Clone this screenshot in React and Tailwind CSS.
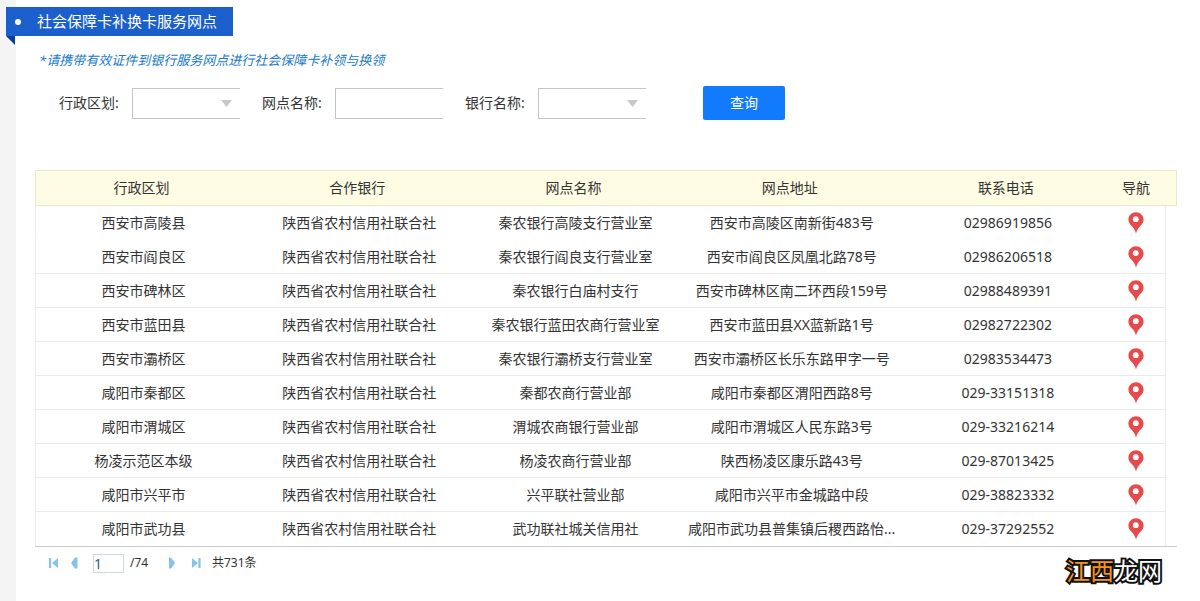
import React, { useState } from 'react';

const columns = ['行政区划', '合作银行', '网点名称', '网点地址', '联系电话'];

const bank = '陕西省农村信用社联合社';

const branches = [
  { area: '西安市高陵县', name: '秦农银行高陵支行营业室', address: '西安市高陵区南新街483号', phone: '02986919856' },
  { area: '西安市阎良区', name: '秦农银行阎良支行营业室', address: '西安市阎良区凤凰北路78号', phone: '02986206518' },
  { area: '西安市碑林区', name: '秦农银行白庙村支行', address: '西安市碑林区南二环西段159号', phone: '02988489391' },
  { area: '西安市蓝田县', name: '秦农银行蓝田农商行营业室', address: '西安市蓝田县XX蓝新路1号', phone: '02982722302' },
  { area: '西安市灞桥区', name: '秦农银行灞桥支行营业室', address: '西安市灞桥区长乐东路甲字一号', phone: '02983534473' },
  { area: '咸阳市秦都区', name: '秦都农商行营业部', address: '咸阳市秦都区渭阳西路8号', phone: '029-33151318' },
  { area: '咸阳市渭城区', name: '渭城农商银行营业部', address: '咸阳市渭城区人民东路3号', phone: '029-33216214' },
  { area: '杨凌示范区本级', name: '杨凌农商行营业部', address: '陕西杨凌区康乐路43号', phone: '029-87013425' },
  { area: '咸阳市兴平市', name: '兴平联社营业部', address: '咸阳市兴平市金城路中段', phone: '029-38823332' },
  { area: '咸阳市武功县', name: '武功联社城关信用社', address: '咸阳市武功县普集镇后稷西路怡...', phone: '029-37292552' },
];

const fieldClass =
  'block w-full h-[31px] px-2 bg-white border border-r-0 border-[#c4c4c4] rounded-none outline-none appearance-none text-sm';

const PinIcon = () => (
  <svg width="16" height="22" viewBox="0 0 16 22" aria-hidden="true">
    <path
      d="M8 0.3C3.8 0.3 0.4 3.6 0.4 7.7C0.4 10.6 2.1 12.3 4.2 14.4C6 16.3 7.3 18.6 8 21.7C8.7 18.6 10 16.3 11.8 14.4C13.9 12.3 15.6 10.6 15.6 7.7C15.6 3.6 12.2 0.3 8 0.3Z"
      fill="#e64a4c"
    />
    <circle cx="7.8" cy="7.2" r="2.9" fill="#fff" />
  </svg>
);

const SelectField = ({ id, label }) => (
  <div className="flex items-center">
    <label htmlFor={id} className="w-[73px]">{label}:</label>
    <div className="relative w-[108px]">
      <select id={id} className={fieldClass}>
        <option value=""></option>
      </select>
      <svg className="absolute right-2 top-3 pointer-events-none" width="11" height="7" viewBox="0 0 11 7">
        <path d="M0 0H11L5.5 7Z" fill="#c8c8c8" />
      </svg>
    </div>
  </div>
);

const PageButton = ({ label, onClick, children }) => (
  <button type="button" aria-label={label} onClick={onClick} className="w-3 h-3 flex items-center justify-center">
    <svg width="12" height="12" viewBox="0 0 12 12" fill="#85c3ea">{children}</svg>
  </button>
);

const Pagination = ({ page, setPage, total }) => (
  <div className="flex items-center h-8 pl-3 text-xs">
    <div className="flex items-center gap-2.5">
      <PageButton label="首页" onClick={() => setPage(1)}>
        <path d="M2 1H4.2V11H2ZM11 1V11L5 6Z" />
      </PageButton>
      <PageButton label="上一页" onClick={() => setPage(Math.max(1, page - 1))}>
        <path d="M6 0.5H8.5V11.5H6L2 6Z" />
      </PageButton>
    </div>
    <input
      aria-label="页码"
      value={page}
      onChange={(e) => setPage(Number(e.target.value) || 1)}
      className="w-[31px] h-[19px] ml-3 border border-[#ccd8e2] outline-none text-sm leading-4 text-[#2b6286]"
    />
    <span className="ml-1.5 w-9">/{total}</span>
    <div className="flex items-center gap-3">
      <PageButton label="下一页" onClick={() => setPage(Math.min(total, page + 1))}>
        <path d="M3 0.5H5L9 6L5 11.5H3Z" />
      </PageButton>
      <PageButton label="末页" onClick={() => setPage(total)}>
        <path d="M2 1V11L8 6ZM8.4 1H10.6V11H8.4Z" />
      </PageButton>
    </div>
    <span className="ml-2.5">共731条</span>
  </div>
);

const App = () => {
  const [page, setPage] = useState(1);

  return (
    <div className="relative flex min-h-screen bg-white text-sm text-[#333] font-['Noto_Sans','Noto_Sans_CJK_SC',sans-serif]">
      <aside className="w-4 shrink-0 bg-[#f4f4f4]" />

      <main className="flex-1 min-w-0 pl-[19px] pr-[23px] pt-[7px]">
        {/* Ribbon title */}
        <div className="relative w-fit -ml-[29px]">
          <h1 className="flex items-center h-[29px] pl-[9px] pr-4 gap-4 bg-[#1b5fcc] text-white text-[15px]">
            <span className="w-1.5 h-1.5 rounded-full bg-white" />
            社会保障卡补换卡服务网点
          </h1>
          <svg className="absolute left-0 top-full" width="9" height="9" viewBox="0 0 9 9">
            <path d="M0 0H9V9Z" fill="#0b3f97" />
          </svg>
        </div>

        <p className="mt-3.5 pl-1 text-[13px] leading-5 italic text-[#2079c9]">
          *请携带有效证件到银行服务网点进行社会保障卡补领与换领
        </p>

        {/* Search form */}
        <form className="flex flex-wrap items-center gap-[22px] mt-4 pl-6" onSubmit={(e) => e.preventDefault()}>
          <SelectField id="area" label="行政区划" />
          <div className="flex items-center">
            <label htmlFor="branch" className="w-[73px]">网点名称:</label>
            <div className="w-[108px]">
              <input id="branch" type="text" className={fieldClass} />
            </div>
          </div>
          <SelectField id="bank" label="银行名称" />
          <button type="submit" className="ml-[35px] w-[82px] h-[34px] rounded-xs bg-[#127bfd] text-white">
            查询
          </button>
        </form>

        {/* Branch table */}
        <table className="w-full mt-[50px] table-fixed border-separate border-spacing-0 border-b border-[#ccc] text-center leading-5">
          <thead>
            <tr className="h-9">
              {columns.map((column) => (
                <th
                  key={column}
                  className="p-0 pr-1 font-normal bg-[#fefce3] border-y border-[#efe8cb] first:border-l"
                >
                  {column}
                </th>
              ))}
              <th className="w-[50px] p-0 pr-2.5 font-normal bg-[#fefce3] border-y border-[#efe8cb]">导航</th>
              <td className="w-[11px] p-0 bg-[#fefce3] border-y border-r border-[#efe8cb]" />
            </tr>
          </thead>
          <tbody>
            {branches.map((branch) => (
              <tr key={branch.phone} className="group h-[34px]">
                <td className="p-0 border-b border-l border-[#ebebeb] group-first:border-b-transparent group-last:border-b-0">{branch.area}</td>
                <td className="p-0 border-b border-[#ebebeb] group-first:border-b-transparent group-last:border-b-0">{bank}</td>
                <td className="p-0 border-b border-[#ebebeb] group-first:border-b-transparent group-last:border-b-0">{branch.name}</td>
                <td className="p-0 border-b border-[#ebebeb] group-first:border-b-transparent group-last:border-b-0 whitespace-nowrap">{branch.address}</td>
                <td className="p-0 border-b border-[#ebebeb] group-first:border-b-transparent group-last:border-b-0">{branch.phone}</td>
                <td className="p-0 pr-2.5 border-b border-r border-[#ebebeb] group-first:border-b-transparent group-last:border-b-0">
                  <a href="#map" aria-label="导航" className="flex justify-center">
                    <PinIcon />
                  </a>
                </td>
                <td className="p-0" />
              </tr>
            ))}
          </tbody>
        </table>

        <Pagination page={page} setPage={setPage} total={74} />
      </main>

      {/* Site mark */}
      <div className="absolute right-[38px] bottom-3 text-2xl leading-9 font-normal text-white [-webkit-text-stroke:4px_#111] [paint-order:stroke_fill]">
        <span className="text-[#f5931f]">江西</span>龙网
      </div>
    </div>
  );
};

export default App;
